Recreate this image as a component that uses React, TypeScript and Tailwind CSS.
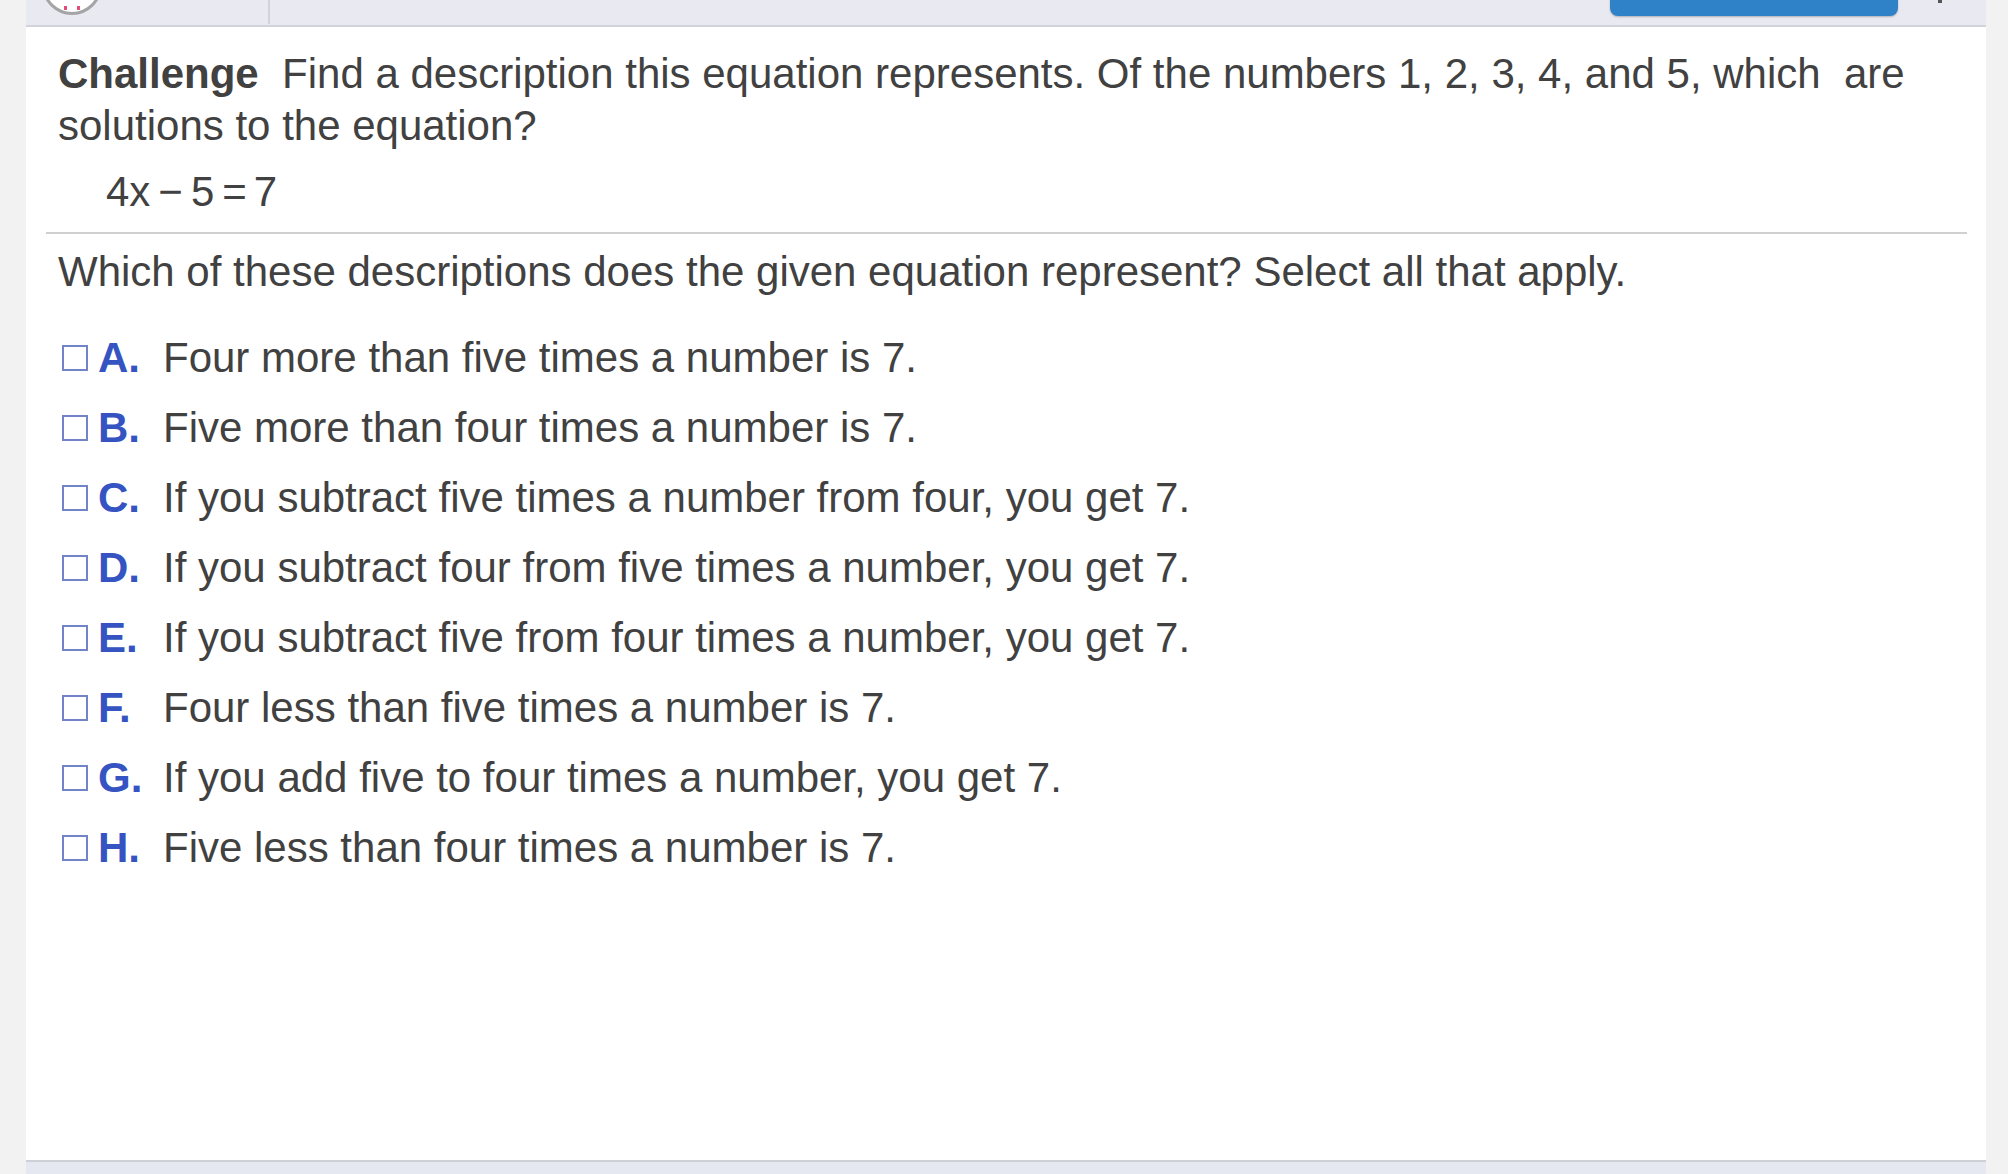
import React from "react";

const options: [string, string][] = [
  ["A.", "Four more than five times a number is 7."],
  ["B.", "Five more than four times a number is 7."],
  ["C.", "If you subtract five times a number from four, you get 7."],
  ["D.", "If you subtract four from five times a number, you get 7."],
  ["E.", "If you subtract five from four times a number, you get 7."],
  ["F.", "Four less than five times a number is 7."],
  ["G.", "If you add five to four times a number, you get 7."],
  ["H.", "Five less than four times a number is 7."],
];

export default function App() {
  return (
    <div
      className="flex h-[1174px] w-full overflow-hidden bg-[#f2f2f2] text-[#414141]"
      style={{ fontFamily: '"Liberation Sans", Arial, Helvetica, sans-serif' }}
    >
      <div className="w-[26px] shrink-0 bg-[#f2f2f2]" />
      <div className="flex min-w-0 flex-1 flex-col bg-white">
        {/* top bar */}
        <div className="flex h-[27px] shrink-0 items-start border-b-2 border-[#d2d3da] bg-[#e9eaf1]">
          <div className="ml-[16px] -mt-[45px] flex h-[60px] w-[60px] shrink-0 items-end justify-center rounded-full border-[3px] border-[#a4a4a4] bg-white pb-[1px]">
            <div className="flex gap-[10px] pb-[1px]">
              <div className="h-[4px] w-[3px] bg-[#e0507a]" />
              <div className="h-[4px] w-[3px] bg-[#e0507a]" />
            </div>
          </div>
          <div className="ml-[166px] h-[24px] w-[2px] bg-[#d3d4da]" />
          <div className="flex-1" />
          <div className="-mt-[24px] h-[40px] w-[288px] rounded-[8px] bg-[#2f82c7] shadow-[0_1px_2px_rgba(0,0,0,0.25)]" />
          <div className="ml-[40px] mr-[44px] h-[3px] w-[4px] bg-[#555]" />
        </div>

        {/* content */}
        <div className="flex-1 px-[20px] pt-[21px] pr-[19px]">
          <div className="pl-[12px]">
            <p className="whitespace-nowrap text-[42px] leading-[52px]">
              <span className="font-bold">Challenge</span>
              {"\u00a0 Find a description this equation represents. Of the numbers 1, 2, 3, 4, and 5, which\u00a0 are"}
              <br />
              solutions to the equation?
            </p>
            <div className="mt-[14px] flex items-center pl-[48px] text-[42px] leading-[52px]">
              <span>4x</span>
              <span className="ml-[8px]">−</span>
              <span className="ml-[8px]">5</span>
              <span className="ml-[8px]">=</span>
              <span className="ml-[7px]">7</span>
            </div>
          </div>
          <div className="mt-[14px] h-[2px] bg-[#d0d0d0]" />
          <div className="pl-[12px]">
            <p className="mt-[12px] whitespace-nowrap text-[42px] leading-[52px]">
              Which of these descriptions does the given equation represent? Select all that apply.
            </p>
            <div className="mt-[25px] flex flex-col">
              {options.map(([letter, text]) => (
                <div key={letter} className="flex h-[70px] items-center text-[42px] leading-[52px]">
                  <div className="ml-[4px] h-[26px] w-[26px] shrink-0 border-2 border-[#7183c9] bg-white" />
                  <span className="ml-[10px] w-[65px] shrink-0 font-bold text-[#3554c2]">{letter}</span>
                  <span className="whitespace-nowrap">{text}</span>
                </div>
              ))}
            </div>
          </div>
        </div>

        {/* bottom band */}
        <div className="h-[14px] shrink-0 border-t-2 border-[#cfd0d6] bg-[#e6e8f1]" />
      </div>
      <div className="w-[22px] shrink-0 bg-[#f2f2f2]" />
    </div>
  );
}
